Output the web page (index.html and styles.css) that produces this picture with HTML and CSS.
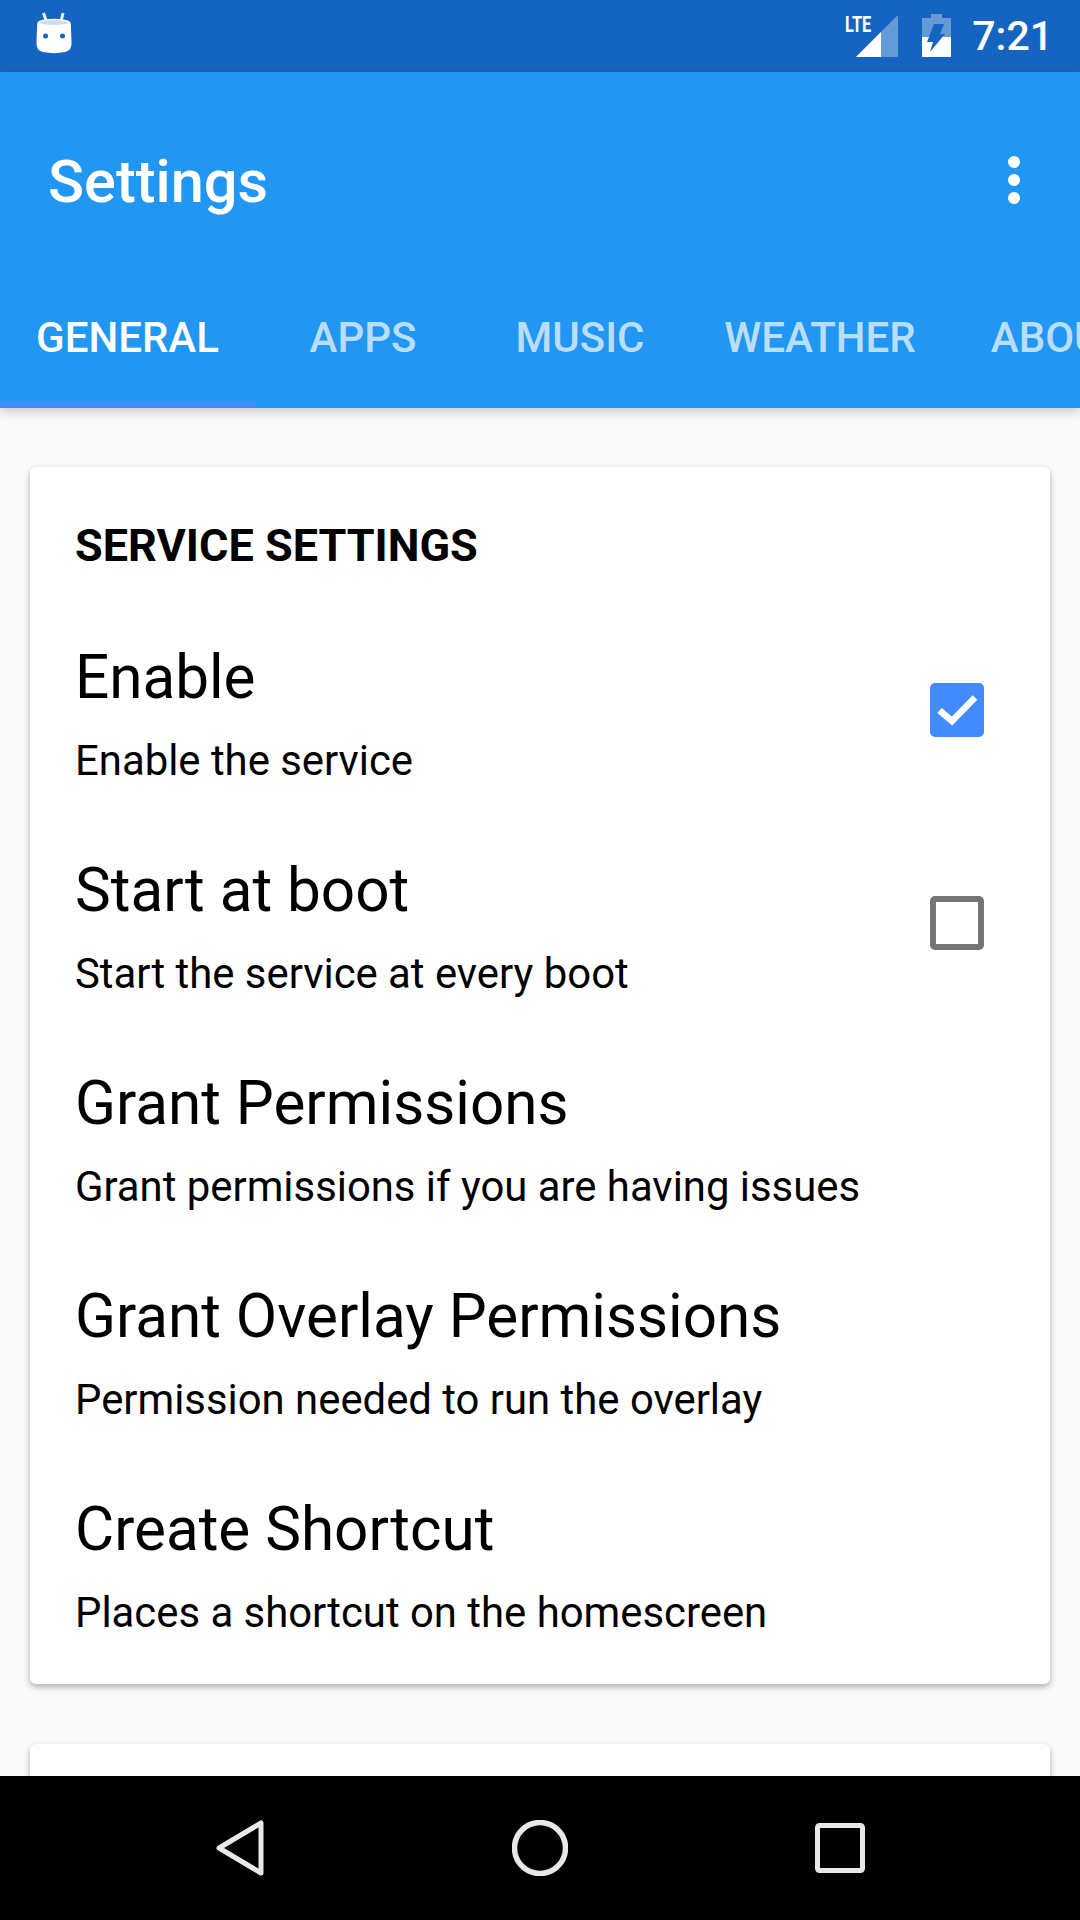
FILE: index.html
```html
<!DOCTYPE html>
<html lang="en">
<head>
  <meta charset="UTF-8">
  <meta name="viewport" content="width=device-width, initial-scale=1.0">
  <title>Settings</title>
  <link rel="stylesheet" href="styles.css">
</head>
<body>
  <div class="screen">
    <div class="status-bar">
      <svg class="status-app" width="40" height="44" viewBox="0 0 40 44">
        <path d="M12.700 11 L9.500 2 M27 11 L29 2" stroke="#e8f0fa" stroke-width="3" fill="none"/>
        <path d="M5 10 C12 7 28 7 35 10 C37 11 37 14 37 17 L37.500 32 C37.500 38 35 40 31 41 C24 42.500 16 42.500 9 41 C5 40 2.500 38 2.500 32 L3 17 C3 14 3 11 5 10 Z" fill="#fff"/>
        <ellipse cx="20" cy="11.500" rx="14" ry="2.500" fill="#cfdcee"/>
        <circle cx="11.500" cy="25" r="2.500" fill="#1565c0"/>
        <circle cx="28.500" cy="25" r="2.500" fill="#1565c0"/>
      </svg>
      <div class="status-right">
        <div class="signal">
          <span class="lte">LTE</span>
          <svg width="42" height="42" viewBox="0 0 42 42">
            <path d="M42 0 V42 H0 Z" fill="#fff" fill-opacity="0.35"/>
            <path d="M25 17 V42 H0 Z" fill="#fff"/>
          </svg>
        </div>
        <svg class="battery" width="29" height="43" viewBox="0 0 29 43">
          <path d="M9 0 H20 V4 H29 V43 H0 V4 H9 Z" fill="#fff" fill-opacity="0.35"/>
          <path d="M0 23 H29 V43 H0 Z" fill="#fff"/>
          <path d="M12 10 H22 L18 20 H23 L8 38 L11 28 H5 Z" fill="#1565c0"/>
        </svg>
        <span class="clock">7:21</span>
      </div>
    </div>

    <header class="app-bar">
      <div class="title-row">
        <h1>Settings</h1>
        <div class="overflow-btn"><i></i><i></i><i></i></div>
      </div>
      <nav class="tabs">
        <div class="tab tab-general active">GENERAL</div>
        <div class="tab tab-apps">APPS</div>
        <div class="tab tab-music">MUSIC</div>
        <div class="tab tab-weather">WEATHER</div>
        <div class="tab tab-about">ABOUT</div>
      </nav>
    </header>

    <main class="content">
      <section class="card">
        <h2>SERVICE SETTINGS</h2>
        <div class="pref">
          <div class="pref-text">
            <div class="pref-title">Enable</div>
            <div class="pref-summary">Enable the service</div>
          </div>
          <div class="checkbox checked">
            <svg width="54" height="54" viewBox="0 0 54 54">
              <path d="M9.500 27.500 L22 38 L45 14.500" stroke="#fff" stroke-width="6.500" fill="none"/>
            </svg>
          </div>
        </div>
        <div class="pref">
          <div class="pref-text">
            <div class="pref-title">Start at boot</div>
            <div class="pref-summary">Start the service at every boot</div>
          </div>
          <div class="checkbox"></div>
        </div>
        <div class="pref">
          <div class="pref-text">
            <div class="pref-title">Grant Permissions</div>
            <div class="pref-summary">Grant permissions if you are having issues</div>
          </div>
        </div>
        <div class="pref">
          <div class="pref-text">
            <div class="pref-title">Grant Overlay Permissions</div>
            <div class="pref-summary">Permission needed to run the overlay</div>
          </div>
        </div>
        <div class="pref">
          <div class="pref-text">
            <div class="pref-title">Create Shortcut</div>
            <div class="pref-summary">Places a shortcut on the homescreen</div>
          </div>
        </div>
      </section>
      <section class="card card-next"></section>
    </main>

    <div class="nav-bar">
      <svg width="48" height="56" viewBox="0 0 48 56">
        <path d="M45 3 V53 L3 28 Z" fill="none" stroke="#e8e8e8" stroke-width="5" stroke-linejoin="round"/>
      </svg>
      <svg width="56" height="56" viewBox="0 0 56 56">
        <circle cx="28" cy="28" r="25.500" fill="none" stroke="#e8e8e8" stroke-width="5.500"/>
      </svg>
      <svg width="50" height="50" viewBox="0 0 50 50">
        <rect x="2.500" y="2.500" width="45" height="45" rx="2" fill="none" stroke="#e8e8e8" stroke-width="5"/>
      </svg>
    </div>
  </div>
</body>
</html>
```

FILE: styles.css
```css
* {
  box-sizing: border-box;
}
body {
  margin: 0;
  font-family: Roboto, "Liberation Sans", sans-serif;
  background-color: #fafafa;
}
.screen {
  width: 1080px;
  height: 1920px;
  display: flex;
  flex-direction: column;
  overflow: hidden;
}

/* status bar */
.status-bar {
  height: 72px;
  flex: none;
  background-color: #1565c0;
  display: flex;
  align-items: center;
  justify-content: space-between;
  padding: 0 27px 0 34px;
  color: #fff;
}
.status-app {
  margin-top: -6px;
}
.status-right {
  display: flex;
  align-items: center;
}
.signal {
  width: 53px;
  height: 44px;
  margin-right: 24px;
  position: relative;
}
.signal svg {
  position: absolute;
  right: 0;
  top: 1px;
}
.lte {
  position: absolute;
  left: 0;
  top: 0;
  font-size: 22px;
  font-weight: 700;
  line-height: 22px;
  transform: scaleX(0.74);
  transform-origin: left top;
  z-index: 1;
}
.battery {
  margin-top: -1px;
}
.clock {
  font-size: 41px;
  font-weight: 500;
  margin-left: 21px;
}

/* app bar */
.app-bar {
  height: 336px;
  flex: none;
  background-color: #2196f3;
  box-shadow: 0 4px 10px rgba(0, 0, 0, 0.2);
  display: flex;
  flex-direction: column;
  position: relative;
  z-index: 2;
}
.title-row {
  height: 168px;
  display: flex;
  align-items: center;
  justify-content: space-between;
  padding: 52px 60px 0 48px;
  flex: none;
}
h1 {
  margin: 0;
  font-size: 59.500px;
  font-weight: 500;
  color: #fff;
}
.overflow-btn {
  display: flex;
  flex-direction: column;
  gap: 6px;
  margin-bottom: 4px;
}
.overflow-btn i {
  display: block;
  width: 12px;
  height: 12px;
  border-radius: 50%;
  background: #fff;
}
.tabs {
  flex: 1;
  display: flex;
  overflow: hidden;
}
.tab {
  flex: none;
  display: flex;
  align-items: center;
  justify-content: center;
  padding-top: 26px;
  font-size: 42px;
  font-weight: 500;
  color: rgba(255, 255, 255, 0.7);
  white-space: nowrap;
}
.tab.active {
  color: #fff;
  border-bottom: 6px solid #448aff;
  padding-top: 32px;
}
.tab-general {
  width: 256px;
  padding-right: 1px;
}
.tab-apps { width: 214px; }
.tab-music { width: 220px; }
.tab-weather { width: 260px; }
.tab-about { width: 218px; }

/* cards */
.content {
  flex: 1;
  min-height: 0;
  overflow: hidden;
  padding: 59px 30px 0;
}
.card {
  background: #fff;
  border-radius: 6px;
  box-shadow: 0 3px 6px rgba(0, 0, 0, 0.3);
  padding: 51px 45px 11px 45px;
  margin-bottom: 60px;
}
.card-next {
  height: 300px;
}
h2 {
  margin: 0 0 34px;
  font-size: 45px;
  line-height: 56px;
  font-weight: 700;
  color: #000;
}
.pref {
  height: 213px;
  display: flex;
  align-items: center;
  justify-content: space-between;
}
.pref-title {
  font-size: 60.200px;
  line-height: 74px;
  color: #000;
}
.pref-summary {
  font-size: 41.850px;
  line-height: 54px;
  margin-top: 19px;
  color: #000;
}
.checkbox {
  width: 54px;
  height: 54px;
  margin: 0 21px 9px 0;
  flex: none;
  border: 6px solid #757575;
  border-radius: 5px;
}
.checkbox.checked {
  border: 0;
  background: #448aff;
}
.checkbox svg {
  display: block;
}

/* nav bar */
.nav-bar {
  height: 144px;
  flex: none;
  background: #000;
  position: relative;
  z-index: 3;
  display: grid;
  grid-template-columns: 482px 292px 306px;
  align-items: center;
  justify-items: start;
}
.nav-bar svg:nth-child(1) { margin-left: 216px; }
.nav-bar svg:nth-child(2) { margin-left: 30px; }
.nav-bar svg:nth-child(3) { margin-left: 41px; }
```
